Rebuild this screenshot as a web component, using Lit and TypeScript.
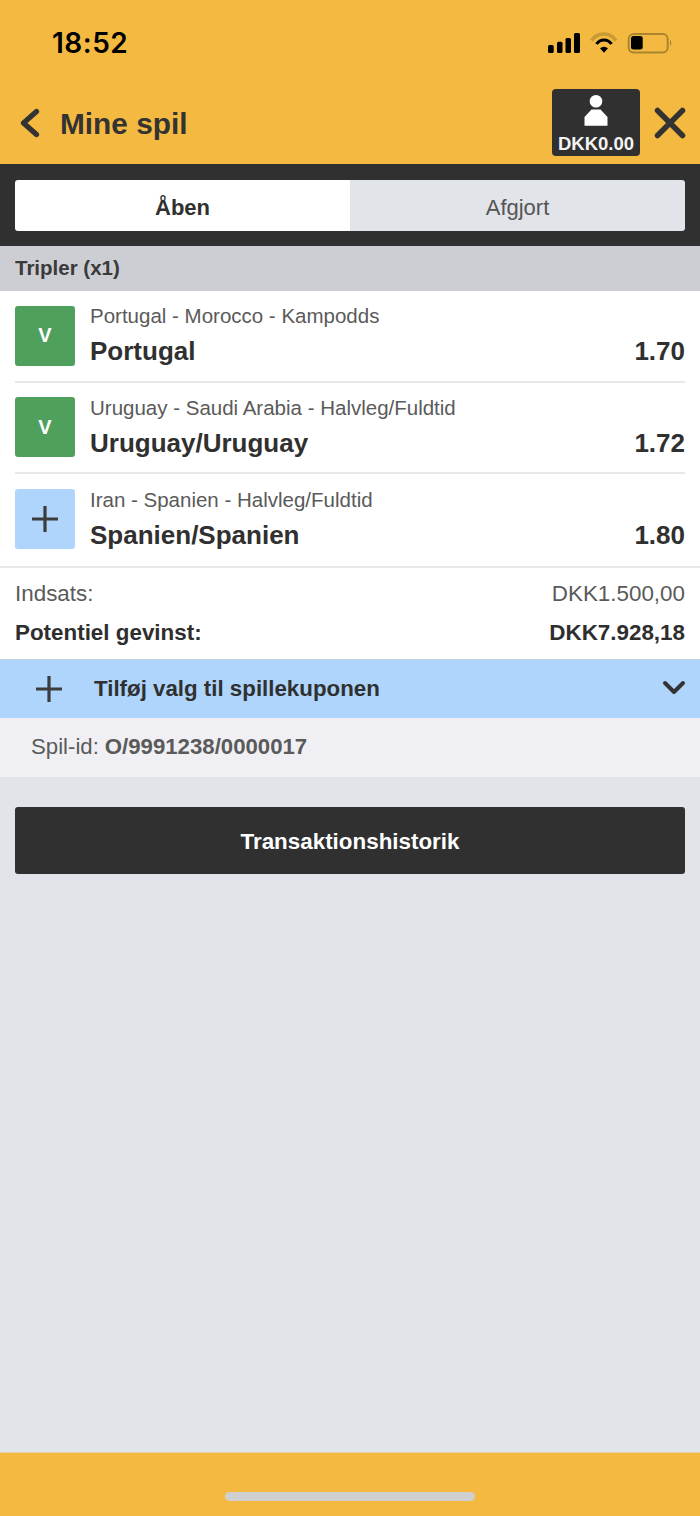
import { LitElement, html, css } from "lit";
import { customElement } from "lit/decorators.js";

const legs = [
  { kind: "won", sub: "Portugal - Morocco - Kampodds", pick: "Portugal", odds: "1.70" },
  { kind: "won", sub: "Uruguay - Saudi Arabia - Halvleg/Fuldtid", pick: "Uruguay/Uruguay", odds: "1.72" },
  { kind: "add", sub: "Iran - Spanien - Halvleg/Fuldtid", pick: "Spanien/Spanien", odds: "1.80" },
];

const plus = (cls: string) => html`<svg class=${cls} viewBox="0 0 28 28"><path d="M14 1v26M1 14h26" fill="none" stroke="#3c3c3c" stroke-width="3.2"/></svg>`;

@customElement("app-root")
export class AppRoot extends LitElement {
  static styles = css`
    :host { display: block; width: 700px; height: 1516px; font-family: "Liberation Sans", Arial, sans-serif; color: #303030; background: #e1e4e9; }
    .page { height: 1516px; display: flex; flex-direction: column; }
    .top { height: 164px; background: #f4b941; flex: none; }
    .status { height: 84px; display: flex; align-items: center; justify-content: space-between; padding: 2px 27px 0 52px; box-sizing: border-box; }
    .time { font-family: Inter, sans-serif; font-weight: 600; font-size: 28px; letter-spacing: 0.5px; color: #000; }
    .status svg { display: block; }
    .nav { height: 80px; display: flex; align-items: center; padding: 0 14px 0 19px; }
    .back { width: 23px; height: 32px; margin-right: 18px; flex: none; }
    .title { font-size: 29.8px; font-weight: 700; flex: 1; color: #333; }
    .acct { width: 88px; height: 67px; margin-top: -3px; background: #303030; border-radius: 4px; color: #f4f4f4; display: flex; flex-direction: column; align-items: center; font-size: 18.5px; font-weight: 700; box-sizing: border-box; padding-top: 6px; }
    .acct svg { width: 24px; height: 31px; margin-bottom: 7px; flex: none; }
    .close { width: 32px; height: 32px; margin: -2px 0 0 14px; }
    .tabsbar { background: #303030; padding: 16px 15px 15px; flex: none; }
    .tabs { display: grid; grid-template-columns: 1fr 1fr; height: 51px; border-radius: 3px; overflow: hidden; font-size: 22px; }
    .tab { display: flex; align-items: center; justify-content: center; background: #e1e4e9; color: #555; padding-top: 5px; }
    .tab.on { background: #fff; color: #303030; font-weight: 700; }
    .group { height: 45px; box-sizing: border-box; padding: 0 15px 2px; background: #cdced3; display: flex; align-items: center; font-size: 20.5px; font-weight: 700; color: #3a3a3a; flex: none; }
    .legs { background: #fff; flex: none; padding: 0 15px; }
    .leg { height: 91.67px; box-sizing: border-box; display: flex; align-items: center; gap: 15px; border-bottom: 2px solid #e6e8ec; }
    .leg:last-child { border-bottom-color: transparent; }
    .badge { width: 60px; height: 60px; border-radius: 3px; flex: none; display: flex; align-items: center; justify-content: center; font-size: 20px; font-weight: 700; }
    .badge.won { background: #4fa05d; color: #fff; }
    .badge.add { background: #afd5fc; }
    .ic { width: 28px; height: 28px; }
    .info { flex: 1; min-width: 0; }
    .sub { font-size: 20.5px; color: #5a5a5a; line-height: 24px; margin-top: -1px; }
    .pick { display: flex; justify-content: space-between; font-size: 26px; font-weight: 700; line-height: 30px; margin-top: 8px; color: #303030; }
    .summary { background: #fff; height: 93px; padding: 7px 15px 0; box-sizing: border-box; flex: none; border-top: 2px solid #e6e8ec; }
    .sumrow { display: flex; justify-content: space-between; align-items: center; height: 39px; font-size: 22.4px; color: #5a5a5a; }
    .sumrow.strong { font-weight: 700; color: #2e2e2e; }
    .addbar { height: 59px; box-sizing: border-box; padding: 2px 14px 0 35px; background: #afd5fc; display: flex; align-items: center; font-size: 22.3px; font-weight: 700; color: #303030; flex: none; box-shadow: inset 0 1px 0 #c4d4e4; }
    .addbar .label { flex: 1; margin-left: 31px; }
    .chev { width: 24px; height: 16px; margin-top: -2px; }
    .betid { height: 59px; background: #f0f0f4; display: flex; align-items: center; padding: 0 31px; font-size: 22.2px; color: #5a5a5a; flex: none; }
    .betid b { margin-left: 6px; }
    .main { flex: 1; padding: 30px 15px 0; }
    .btn { height: 67px; box-sizing: border-box; padding-top: 4px; background: #303030; color: #fff; border-radius: 3px; display: flex; align-items: center; justify-content: center; font-size: 22.4px; font-weight: 700; }
    .foot { height: 64px; background: #f4b941; border-top: 1px solid #e6d3a8; box-sizing: border-box; flex: none; display: flex; justify-content: center; padding-top: 39px; }
    .home { width: 250px; height: 9px; border-radius: 5px; background: #cfcfcf; }
  `;

  render() {
    return html`<div class="page">
      <div class="top">
        <div class="status">
          <span class="time">18:52</span>
          <svg width="125" height="24" viewBox="0 0 125 24">
            <rect x="0" y="14" width="5.700" height="8" rx="1.500" fill="#000"/>
            <rect x="9" y="10.700" width="5.500" height="11.300" rx="1.500" fill="#000"/>
            <rect x="17.500" y="7" width="5.500" height="15" rx="1.500" fill="#000"/>
            <rect x="26" y="2" width="6" height="20" rx="1.500" fill="#000"/>
            <path d="M43.500 9.500a14.800 14.800 0 0 1 24.500 0" fill="none" stroke="#c89a35" stroke-width="3.500"/>
            <path d="M48.500 13a9 9 0 0 1 15 0" fill="none" stroke="#000" stroke-width="3"/>
            <path d="M52 17.200a6 6 0 0 1 8 0L56 21.700z" fill="#000"/>
            <rect x="80.700" y="3" width="39" height="18.500" rx="5" fill="none" stroke="#a98531" stroke-width="2"/>
            <rect x="83" y="5" width="11.700" height="13.500" rx="2.500" fill="#000"/>
            <path d="M122 9c1.800.6 1.800 5.400 0 6z" fill="#a98531"/>
          </svg>
        </div>
        <div class="nav">
          <svg class="back" viewBox="0 0 23 32"><path d="M17.500 3.500 4.500 15l13 11.500" fill="none" stroke="#333" stroke-width="5.200" stroke-linecap="round" stroke-linejoin="round"/></svg>
          <span class="title">Mine spil</span>
          <div class="acct">
            <svg viewBox="0 0 24 31"><circle cx="12" cy="6.300" r="6.300" fill="#fff"/><path d="M7.500 14.500h9l7 7.500v8.700H.5V22z" fill="#fff"/></svg>
            <span>DKK0.00</span>
          </div>
          <svg class="close" viewBox="0 0 32 32"><path d="M3.500 3.500l25 25M28.500 3.500l-25 25" fill="none" stroke="#333" stroke-width="5.500" stroke-linecap="round"/></svg>
        </div>
      </div>
      <div class="tabsbar">
        <div class="tabs"><div class="tab on">Åben</div><div class="tab">Afgjort</div></div>
      </div>
      <div class="group">Tripler (x1)</div>
      <div class="legs">
        ${legs.map(
          (l) => html`<div class="leg">
            <div class="badge ${l.kind}">${l.kind === "won" ? "V" : plus("ic")}</div>
            <div class="info">
              <div class="sub">${l.sub}</div>
              <div class="pick"><span>${l.pick}</span><span>${l.odds}</span></div>
            </div>
          </div>`
        )}
      </div>
      <div class="summary">
        <div class="sumrow"><span>Indsats:</span><span>DKK1.500,00</span></div>
        <div class="sumrow strong"><span>Potentiel gevinst:</span><span>DKK7.928,18</span></div>
      </div>
      <div class="addbar">
        ${plus("ic")}
        <span class="label">Tilføj valg til spillekuponen</span>
        <svg class="chev" viewBox="0 0 24 16"><path d="M3 3l9 9 9-9" fill="none" stroke="#333" stroke-width="4" stroke-linecap="round" stroke-linejoin="round"/></svg>
      </div>
      <div class="betid">Spil-id: <b>O/9991238/0000017</b></div>
      <div class="main"><div class="btn">Transaktionshistorik</div></div>
      <div class="foot"><div class="home"></div></div>
    </div>`;
  }
}
